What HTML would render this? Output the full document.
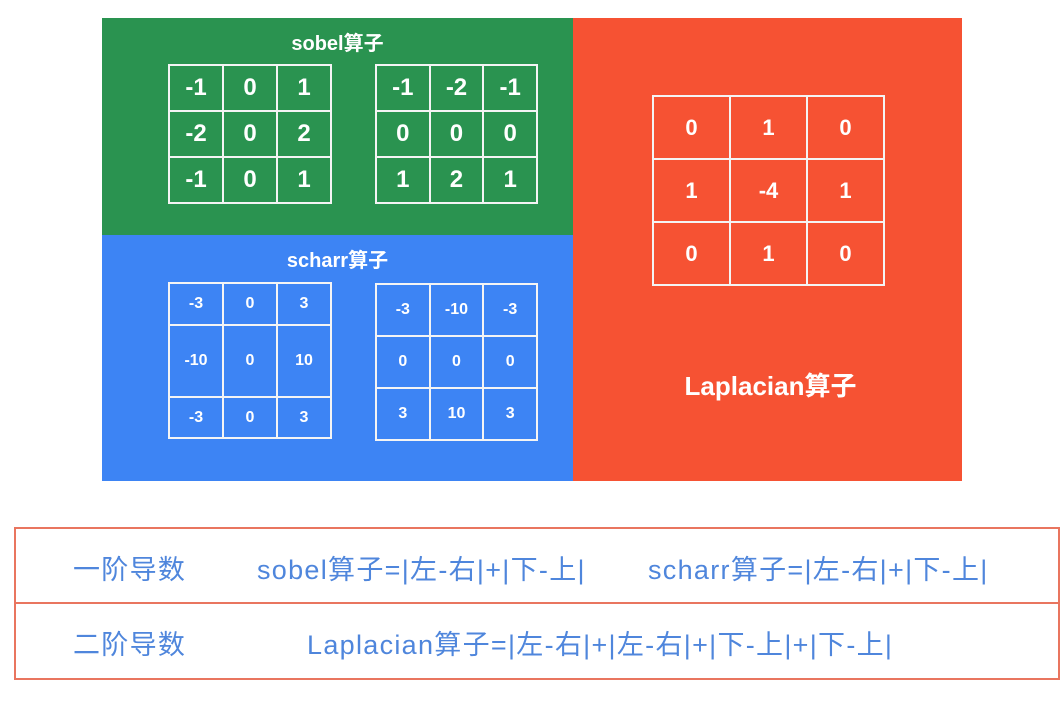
<!DOCTYPE html>
<html><head><meta charset="utf-8"><style>
body{margin:0;width:1064px;height:707px;background:#fff;position:relative;overflow:hidden;font-family:"Liberation Sans","Noto Sans CJK SC",sans-serif}
.a{position:absolute}
table{position:absolute;border-collapse:collapse;color:#fff;font-weight:bold;text-align:center;table-layout:fixed}
td{border:2px solid #f4f4f4;padding:0}
.t{position:absolute;color:#fff;font-weight:bold;text-align:center}
.b{position:absolute;color:#4f86dc;font-size:27px;letter-spacing:1.3px;white-space:nowrap}
</style></head><body>
<div class="a" style="left:102px;top:18px;width:471px;height:217px;background:#2a9350"></div>
<div class="a" style="left:102px;top:235px;width:471px;height:246px;background:#3d84f4"></div>
<div class="a" style="left:573px;top:18px;width:389px;height:463px;background:#f65233"></div>
<div class="t" style="left:102px;width:471px;top:27px;font-size:20px">sobel算子</div>
<div class="t" style="left:102px;width:471px;top:244px;font-size:20px">scharr算子</div>
<div class="t" style="left:573px;width:395px;top:366px;font-size:26px">Laplacian算子</div>
<table style="left:168px;top:64px;width:164px;font-size:24px">
<tr style="height:46px"><td>-1</td><td>0</td><td>1</td></tr>
<tr style="height:46px"><td>-2</td><td>0</td><td>2</td></tr>
<tr style="height:46px"><td>-1</td><td>0</td><td>1</td></tr></table>
<table style="left:375px;top:64px;width:163px;font-size:24px">
<tr style="height:46px"><td>-1</td><td>-2</td><td>-1</td></tr>
<tr style="height:46px"><td>0</td><td>0</td><td>0</td></tr>
<tr style="height:46px"><td>1</td><td>2</td><td>1</td></tr></table>
<table style="left:168px;top:282px;width:164px;font-size:16px">
<tr style="height:42px"><td>-3</td><td>0</td><td>3</td></tr>
<tr style="height:72px"><td>-10</td><td>0</td><td>10</td></tr>
<tr style="height:41px"><td>-3</td><td>0</td><td>3</td></tr></table>
<table style="left:375px;top:283px;width:163px;font-size:16px">
<tr style="height:52px"><td>-3</td><td>-10</td><td>-3</td></tr>
<tr style="height:52px"><td>0</td><td>0</td><td>0</td></tr>
<tr style="height:52px"><td>3</td><td>10</td><td>3</td></tr></table>
<table style="left:652px;top:95px;width:233px;font-size:22px">
<tr style="height:63px"><td>0</td><td>1</td><td>0</td></tr>
<tr style="height:63px"><td>1</td><td>-4</td><td>1</td></tr>
<tr style="height:63px"><td>0</td><td>1</td><td>0</td></tr></table>
<div class="a" style="left:14px;top:527px;width:1042px;height:149px;border:2px solid #e9755f"></div>
<div class="a" style="left:14px;top:602px;width:1044px;height:2px;background:#e9755f"></div>
<div class="b" style="left:73px;top:548px">一阶导数</div>
<div class="b" style="left:257px;top:548px">sobel算子=|左-右|+|下-上|</div>
<div class="b" style="left:648px;top:548px">scharr算子=|左-右|+|下-上|</div>
<div class="b" style="left:73px;top:623px">二阶导数</div>
<div class="b" style="left:307px;top:623px">Laplacian算子=|左-右|+|左-右|+|下-上|+|下-上|</div>
</body></html>
